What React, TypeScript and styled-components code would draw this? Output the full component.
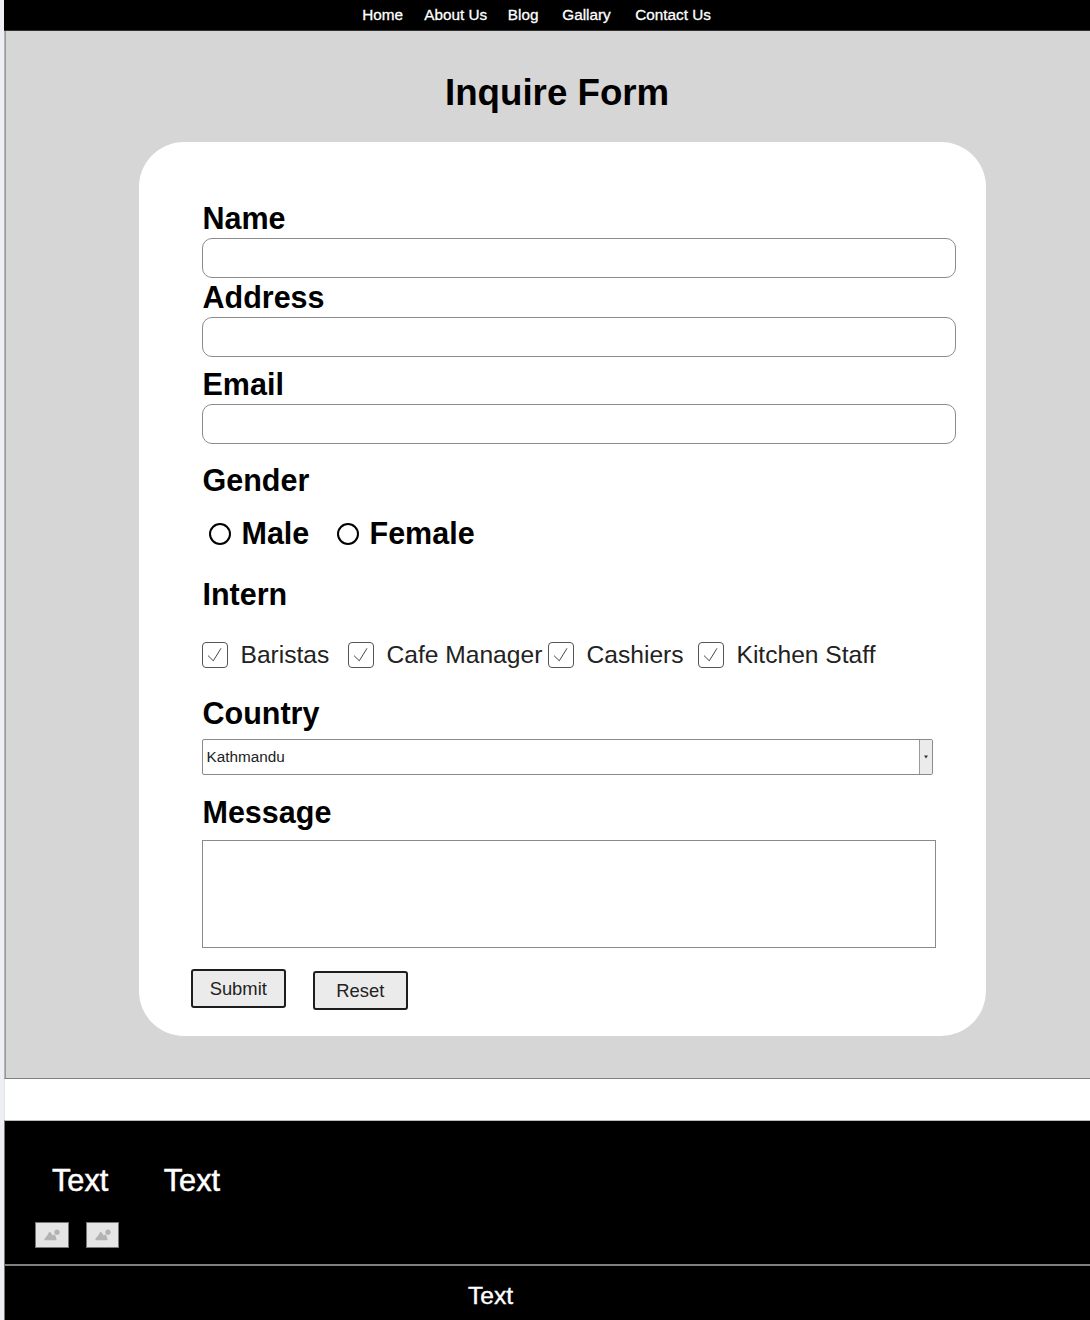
import React from "react";
import styled, { createGlobalStyle } from "styled-components";

const GlobalStyle = createGlobalStyle`
  *, *::before, *::after { box-sizing: border-box; }
  body {
    margin: 0;
    background: #edeff5;
    font-family: "Liberation Sans", Arial, Helvetica, sans-serif;
    color: #000;
  }
  svg { display: block; flex: none; }
`;

const Page = styled.div`
  width: 1090px;
  height: 1320px;
  padding-left: 4px;
  display: flex;
  flex-direction: column;
  overflow: hidden;
`;

const NavBar = styled.nav`
  height: 31px;
  flex: none;
  background: #000;
  border-bottom: 1px solid #333;
  display: flex;
  padding-left: 358.3px;
`;

const NavLink = styled.a<{ $width: number }>`
  flex: none;
  width: ${(p) => p.$width}px;
  color: #fff;
  font-size: 15.3px;
  line-height: 30px;
  white-space: nowrap;
  text-decoration: none;
  -webkit-text-stroke: 0.3px #fff;
`;

const Main = styled.main`
  height: 1048px;
  flex: none;
  background: #d6d6d6;
  border-left: 1px solid #b4b6bb;
  box-shadow: inset 1px 0 0 #98989a;
  border-bottom: 1px solid #808080;
  display: flex;
  flex-direction: column;
  padding-left: 134px;
`;

const Title = styled.h1`
  margin: 40px 0 27px 306px;
  font-size: 36.7px;
  line-height: 44px;
  font-weight: 700;
  white-space: nowrap;
`;

const Card = styled.form`
  width: 846.5px;
  height: 894px;
  background: #fff;
  border-radius: 45px;
  padding: 58px 0 0 63px;
  display: flex;
  flex-direction: column;
  align-items: flex-start;
`;

const Field = styled.div<{ $height: number }>`
  flex: none;
  height: ${(p) => p.$height}px;
  display: flex;
  flex-direction: column;
  align-items: flex-start;
`;

const Label = styled.span<{ $gap?: number }>`
  display: block;
  padding-left: 0.5px;
  font-size: 30.5px;
  line-height: 36px;
  font-weight: 700;
  white-space: nowrap;
  margin-bottom: ${(p) => p.$gap ?? 2}px;
`;

const TextInput = styled.input`
  width: 754px;
  height: 40px;
  margin: 0;
  padding: 0 12px;
  border: 1px solid #8c8c8c;
  border-radius: 10px;
  background: #fff;
  font: inherit;
  outline: none;
`;

const RadioRow = styled.div`
  display: flex;
  padding-left: 7px;
`;

const RadioOption = styled.label<{ $width: number }>`
  display: flex;
  width: ${(p) => p.$width}px;
  align-items: center;
  gap: 10px;
`;

const Radio = styled.span`
  width: 22px;
  height: 22px;
  margin-top: 2px;
  border: 2px solid #000;
  border-radius: 50%;
`;

const CheckRow = styled.div`
  display: flex;
`;

const CheckOption = styled.label<{ $width: number }>`
  flex: none;
  width: ${(p) => p.$width}px;
  height: 26px;
  display: flex;
  gap: 13px;
  color: #222;
  font-size: 24.6px;
  line-height: 26px;
  white-space: nowrap;
`;

const CheckBox = styled.span`
  flex: none;
  width: 25.5px;
  height: 25.5px;
  border: 1px solid #555;
  border-radius: 4px;
`;

const Select = styled.div`
  width: 731px;
  height: 36px;
  border: 1px solid #8a8a8a;
  border-radius: 2px;
  display: flex;
  justify-content: space-between;
  color: #222;
  font-size: 15.3px;
  line-height: 34px;
  padding-left: 3.5px;
`;

const SelectButton = styled.span`
  width: 13px;
  background: #ebebeb;
  border-left: 1px solid #9a9a9a;
  display: flex;
  align-items: center;
  justify-content: center;
`;

const TextArea = styled.textarea`
  display: block;
  width: 734px;
  height: 108px;
  margin: 0;
  border: 1px solid #8a8a8a;
  border-radius: 0;
  resize: none;
  outline: none;
  background: #fff;
`;

const Actions = styled.div`
  display: flex;
  gap: 27.5px;
  margin-left: -11px;
`;

const Button = styled.button<{ $drop?: number }>`
  width: 94.5px;
  height: 39px;
  margin: ${(p) => p.$drop ?? 0}px 0 0;
  padding: 0;
  border: 2px solid #1d1d1f;
  border-radius: 3px;
  background: #ebebeb;
  color: #222;
  font-family: inherit;
  font-size: 18.4px;
  line-height: 34px;
`;

const Spacer = styled.div`
  height: 41px;
  flex: none;
  background: #fff;
  border-left: 1px solid #e2e3e8;
`;

const Footer = styled.footer`
  flex: 1;
  background: #000;
  border-top: 1px solid #bbb;
  color: #fff;
  border-left: 1px solid #777;
  display: flex;
  flex-direction: column;
`;

const FooterTop = styled.div`
  height: 145px;
  flex: none;
  border-bottom: 2px solid #808080;
  padding: 42px 0 0 30px;
`;

const FooterLinks = styled.div`
  display: flex;
  gap: 55.5px;
  padding-left: 17px;
`;

const FooterText = styled.span`
  font-size: 30.7px;
  line-height: 36px;
  -webkit-text-stroke: 0.5px #fff;
`;

const Thumbs = styled.div`
  display: flex;
  gap: 17px;
  margin-top: 23px;
`;

const Thumb = styled.div`
  width: 33.5px;
  height: 26px;
  background: #e5e5e5;
  border: 1px solid #777;
`;

const FooterBottom = styled.div`
  padding: 15px 0 0 463px;
  font-size: 24.6px;
  line-height: 30px;
  -webkit-text-stroke: 0.4px #fff;
`;

const Tick = () => (
  <svg width="24" height="24" viewBox="0 0 24 24" fill="none" stroke="#333" strokeWidth="0.9">
    <path d="M5 12.6 L10.3 17.8 L18 5.3" />
  </svg>
);

const Placeholder = () => (
  <svg width="32" height="24" viewBox="0 0 32 24" fill="#b3b3b3">
    <path d="M9 17.3 Q7.9 17.3 8.4 16.1 L10.6 12.9 Q11.3 12.6 11.7 11.8 L12.7 9.6 Q13.7 8.4 14.8 9.6 L16.6 12.6 L17.7 11.7 Q18.7 11.3 19.2 12.3 L20.5 15.9 Q20.8 17.3 19.7 17.3 Z" />
    <circle cx="21" cy="9.2" r="2.6" />
  </svg>
);

const links = [
  { text: "Home", width: 62 },
  { text: "About Us", width: 83.5 },
  { text: "Blog", width: 54.5 },
  { text: "Gallary", width: 73 },
  { text: "Contact Us", width: 90 },
];

const roles = [
  { text: "Baristas", width: 146 },
  { text: "Cafe Manager", width: 200 },
  { text: "Cashiers", width: 150 },
  { text: "Kitchen Staff", width: 190 },
];

export default function App() {
  return (
    <>
      <GlobalStyle />
      <Page>
        <NavBar>
          {links.map((l) => (
            <NavLink key={l.text} $width={l.width}>{l.text}</NavLink>
          ))}
        </NavBar>
        <Main>
          <Title>Inquire Form</Title>
          <Card>
            <Field $height={79}>
              <Label>Name</Label>
              <TextInput />
            </Field>
            <Field $height={87}>
              <Label>Address</Label>
              <TextInput />
            </Field>
            <Field $height={96}>
              <Label>Email</Label>
              <TextInput />
            </Field>
            <Field $height={114}>
              <Label $gap={17}>Gender</Label>
              <RadioRow>
                <RadioOption $width={128}>
                  <Radio />
                  <Label $gap={0}>Male</Label>
                </RadioOption>
                <RadioOption $width={150}>
                  <Radio />
                  <Label $gap={0}>Female</Label>
                </RadioOption>
              </RadioRow>
            </Field>
            <Field $height={119}>
              <Label $gap={30}>Intern</Label>
              <CheckRow>
                {roles.map((r) => (
                  <CheckOption key={r.text} $width={r.width}>
                    <CheckBox><Tick /></CheckBox>
                    {r.text}
                  </CheckOption>
                ))}
              </CheckRow>
            </Field>
            <Field $height={99}>
              <Label $gap={8}>Country</Label>
              <Select>
                Kathmandu
                <SelectButton>
                  <svg width="4" height="4" viewBox="0 0 4 4" fill="#333">
                    <path d="M0 0.6 H4 L2 3.6 Z" />
                  </svg>
                </SelectButton>
              </Select>
            </Field>
            <Field $height={175}>
              <Label $gap={10}>Message</Label>
              <TextArea />
            </Field>
            <Actions>
              <Button type="button">Submit</Button>
              <Button type="button" $drop={2}>Reset</Button>
            </Actions>
          </Card>
        </Main>
        <Spacer />
        <Footer>
          <FooterTop>
            <FooterLinks>
              <FooterText>Text</FooterText>
              <FooterText>Text</FooterText>
            </FooterLinks>
            <Thumbs>
              <Thumb><Placeholder /></Thumb>
              <Thumb><Placeholder /></Thumb>
            </Thumbs>
          </FooterTop>
          <FooterBottom>Text</FooterBottom>
        </Footer>
      </Page>
    </>
  );
}
